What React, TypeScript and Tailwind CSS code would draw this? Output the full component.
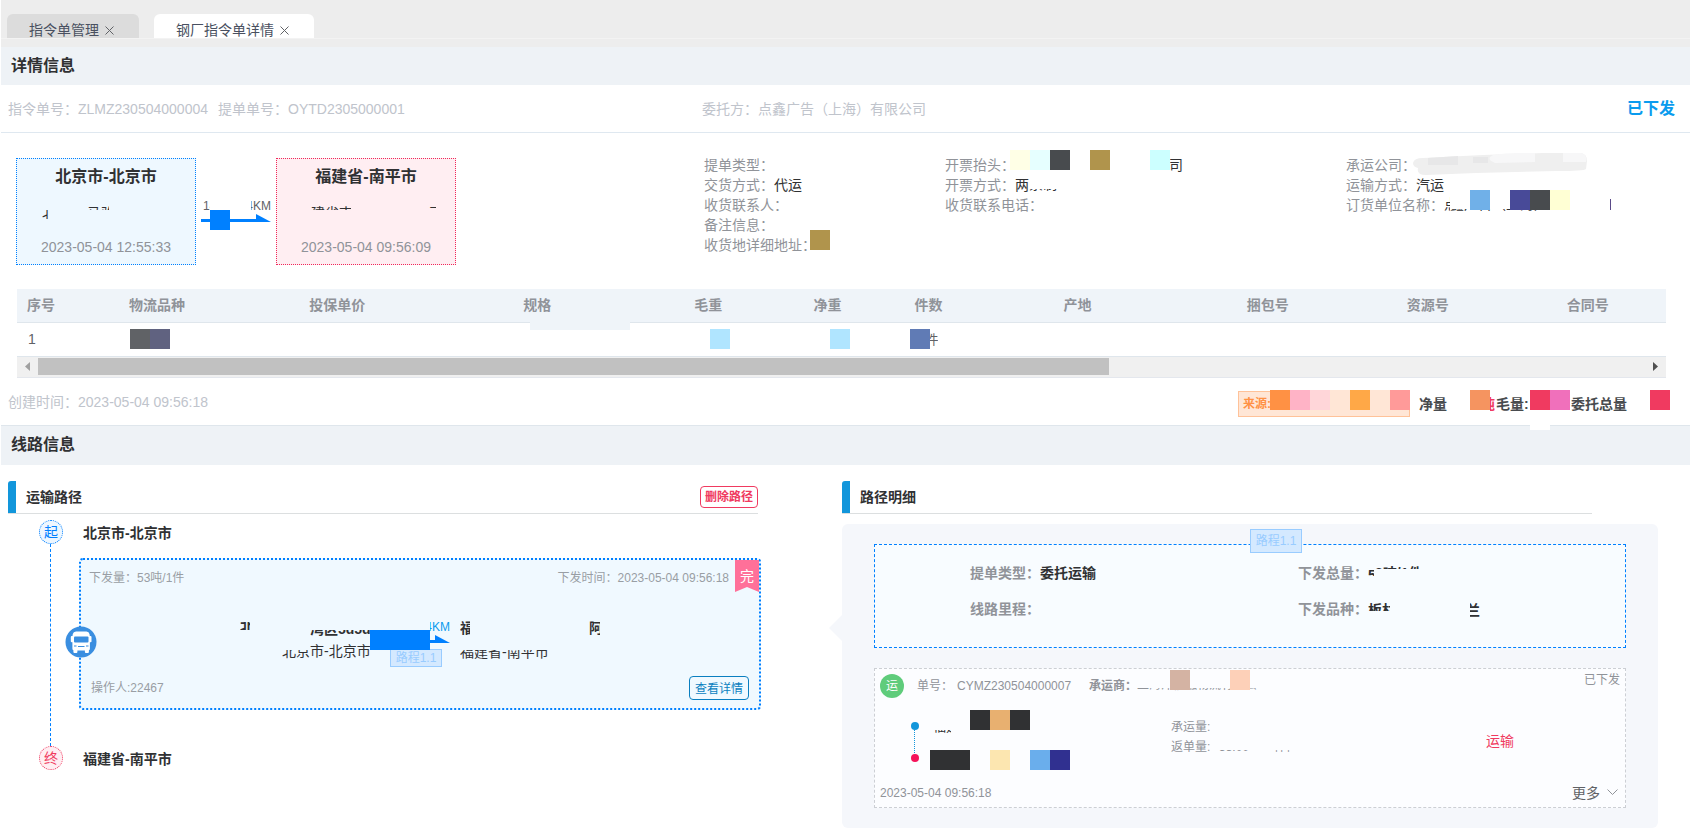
import type { ReactNode } from "react";
import clsx from "clsx";

const tabs = [
  { label: "指令单管理", active: false },
  { label: "钢厂指令单详情", active: true },
];

const columns = [
  { label: "序号", width: "w-[102px]" },
  { label: "物流品种", width: "w-[180px]" },
  { label: "投保单价", width: "w-[214px]" },
  { label: "规格", width: "w-[171px]" },
  { label: "毛重", width: "w-[119px]" },
  { label: "净重", width: "w-[101px]" },
  { label: "件数", width: "w-[149px]" },
  { label: "产地", width: "w-[183px]" },
  { label: "捆包号", width: "w-[160px]" },
  { label: "资源号", width: "w-[160px]" },
  { label: "合同号", width: "w-[109px]" },
];

// row of 20px squares that hides a private value
function Mosaic({ blocks, className }: { blocks: string[]; className?: string }) {
  return (
    <span className={clsx("flex shrink-0", className)}>
      {blocks.map((block, i) => (
        <i key={i} className={clsx("size-5 shrink-0", block)} />
      ))}
    </span>
  );
}

// partly hidden text, only a strip of it shows
function Strip({ className, children }: { className: string; children: ReactNode }) {
  return (
    <span className={clsx("absolute flex overflow-hidden whitespace-nowrap leading-none", className)}>
      <span className="shrink-0">{children}</span>
    </span>
  );
}

function Field({ label, value, children }: { label: string; value?: string; children?: ReactNode }) {
  return (
    <div className="relative flex h-5 items-center whitespace-nowrap">
      <dt className="text-[#909399]">{label}：</dt>
      <dd className="text-[#303133]">{value}</dd>
      {children}
    </div>
  );
}

function SectionHeader({ title, className }: { title: string; className?: string }) {
  return (
    <h2 className={clsx("flex items-center bg-[#eef2f6] pl-[10px] text-base font-bold text-[#303133]", className)}>
      {title}
    </h2>
  );
}

function PanelTitle({ title, className, children }: { title: string; className?: string; children?: ReactNode }) {
  return (
    <div className={clsx("flex h-[33px] items-center border-b border-[#dcdfe0]", className)}>
      <span className="h-8 w-2 rounded-tl-[3px] bg-[#1296db]" />
      <h3 className="ml-[10px] flex-1 font-bold text-[#303133]">{title}</h3>
      {children}
    </div>
  );
}

function PlaceCard({ name, time, className, children }: { name: string; time: string; className: string; children: ReactNode }) {
  return (
    <div className={clsx("relative flex h-[107px] w-[180px] flex-col items-center justify-between border border-dotted pt-[6px] pb-[7px]", className)}>
      <p className="text-base font-bold text-[#303133]">{name}</p>
      <p className="text-[#909399]">{time}</p>
      {children}
    </div>
  );
}

function BusIcon() {
  return (
    <svg viewBox="0 0 32 32" className="absolute top-[66px] -left-4 size-8">
      <circle cx="16" cy="16" r="15.5" fill="#3a8ee0" />
      <path
        fill="#fff"
        d="M11 5.500h10.500q2.500 0 3 2.500l.3 2h.7q1 0 1 1v4.500q0 .8-1 .8h-.6v6.200q0 1.500-1 1.800v1.700q0 1-1 1h-2q-1 0-1-1v-1.500h-7.500V26q0 1-1 1h-2q-1 0-1-1v-1.700q-1-.3-1-1.800v-6.200h-.6q-1 0-1-.8V11q0-1 1-1h.7l.3-2q.5-2.500 3.200-2.500Z"
      />
      <path fill="#3a8ee0" d="M10 10.500h12.500q1 0 1 1v4q0 1-1 1H10q-1 0-1-1v-4q0-1 1-1Z" />
      <path fill="none" stroke="#3a8ee0" strokeWidth="1.200" d="M9 20h2.500M21 20h2.500M13 20.500h6.500" />
    </svg>
  );
}

function PathTag({ className }: { className?: string }) {
  return (
    <span className={clsx("absolute flex items-center justify-center border border-[#99ccff] bg-[#d4e9ff] text-xs text-[#99ccff]", className)}>
      路程1.1
    </span>
  );
}

function OrderTable() {
  return (
    <div className="relative mr-6 ml-4">
      <table className="w-full table-fixed border-collapse text-left">
        <thead>
          <tr className="h-[33px] border-b border-[#dfe6ec] bg-[#eff4f9]">
            {columns.map((col) => (
              <th key={col.label} className={clsx("px-[10px] font-bold text-[#909399]", col.width)}>
                {col.label}
              </th>
            ))}
          </tr>
        </thead>
        <tbody>
          <tr className="h-[34px] border-b border-[#dfe6ec] text-[#606266]">
            <td className="px-[11px]">1</td>
            <td className="px-[11px]">
              <Mosaic blocks={["bg-[#606266]", "bg-[#606280]"]} />
            </td>
            <td />
            <td className="relative">
              <span className="absolute -top-px left-[17px] h-2 w-[100px] bg-[#eff4f9]" />
            </td>
            <td className="pl-[26px]">
              <Mosaic blocks={["bg-[#b0e5ff]"]} />
            </td>
            <td className="pl-[27px]">
              <Mosaic blocks={["bg-[#b0e5ff]"]} />
            </td>
            <td className="pl-[6px]">
              <span className="relative flex items-center">
                <Mosaic blocks={["bg-[#607bb5]"]} />
                <Strip className="left-5 w-2 justify-end text-[13px]">件</Strip>
              </span>
            </td>
            <td />
            <td />
            <td />
            <td />
          </tr>
        </tbody>
      </table>
      {/* horizontal scrollbar */}
      <div className="flex h-[21px] items-center border-b border-[#e4e7ed] bg-[#f0f0f0]">
        <button aria-label="向左滚动" className="flex w-[21px] justify-center">
          <svg viewBox="0 0 5 9" className="h-[9px] w-[5px]">
            <path d="M5 0v9L0 4.500Z" fill="#a0a0a0" />
          </svg>
        </button>
        <div className="flex-1">
          <div className="h-[17px] w-2/3 bg-[#c1c1c1]" />
        </div>
        <button aria-label="向右滚动" className="flex w-[21px] justify-center">
          <svg viewBox="0 0 5 9" className="h-[9px] w-[5px]">
            <path d="M0 0v9l5-4.500Z" fill="#505050" />
          </svg>
        </button>
      </div>
    </div>
  );
}

function TransportPath() {
  return (
    <section>
      <PanelTitle title="运输路径">
        <button className="h-[22px] w-[58px] rounded border border-[#f03a60] text-xs leading-5 font-bold text-[#f03a60]">
          删除路径
        </button>
      </PanelTitle>

      <div className="relative pt-[6px] pl-[31px]">
        <span className="absolute top-[30px] left-[42px] h-[202px] border-l border-dashed border-[#0080ff]" />
        <div className="flex h-6 items-center gap-5">
          <span className="flex size-6 items-center justify-center rounded-full border border-dotted border-[#0080ff] bg-[#eef7ff] text-[#0080ff]">
            起
          </span>
          <span className="pt-[2px] font-bold text-[#303133]">北京市-北京市</span>
        </div>

        <div className="relative -mr-[3px] mt-[14px] ml-10 flex h-[152px] flex-col justify-between rounded border-2 border-dotted border-[#0080ff] bg-[#f0f9ff] pt-[10px] pr-[10px] pb-2 pl-2 text-xs text-[#999ea4]">
          <BusIcon />
          <div className="flex justify-between">
            <span>下发量：53吨/1件</span>
            <span className="pr-5">下发时间：2023-05-04 09:56:18</span>
          </div>
          <svg viewBox="0 0 24 32" className="absolute top-0 right-0 h-8 w-6">
            <path d="M0 0h24v32l-12-5-12 5Z" fill="#ff7099" />
          </svg>
          <span className="absolute top-[6px] right-[5px] text-sm text-white">完</span>

          <div className="text-sm text-[#303133]">
            <Strip className="top-[62px] left-[159px] h-2 w-[10px] items-center font-bold">北</Strip>
            <Strip className="top-[70px] left-[229px] h-[6px] w-[60px] items-end font-bold">湾区5d5d</Strip>
            <Strip className="top-[84px] left-[201px] h-4 w-[89px]">北京市-北京市</Strip>
            <i className="absolute top-[82px] left-[200px] h-2 w-[29px] bg-[#f0f9ff]" />
            <Strip className="top-[61px] left-[379px] h-[14px] w-[10px] font-bold">福</Strip>
            <Strip className="top-[61px] left-[508px] h-[14px] w-[11px] font-bold">阿</Strip>
            <Strip className="top-[90px] left-[379px] h-[9px] w-[90px] items-end">福建省-南平市</Strip>
          </div>
          <Strip className="top-[61px] left-[349px] h-3 w-5 justify-end text-[#0a9bee]">4KM</Strip>
          <span className="absolute top-[70px] left-[289px] z-10 h-5 w-[60px] bg-[#0080ff]" />
          <svg viewBox="0 0 20 9" className="absolute top-[75px] left-[349px] h-[9px] w-5">
            <path d="M0 5h5V0l15 8H0Z" fill="#0080ff" />
          </svg>
          <PathTag className="top-[89px] left-[309px] h-[18px] w-[52px]" />

          <div className="flex items-end justify-between">
            <span className="pb-[4px] pl-[2px]">操作人:22467</span>
            <button className="h-6 w-[60px] rounded border border-[#0a7fc0] leading-6 text-[#0a7fc0]">查看详情</button>
          </div>
        </div>

        <div className="mt-9 flex h-6 items-center gap-5">
          <span className="flex size-6 items-center justify-center rounded-full border border-dotted border-[#f03a60] bg-[#ffeef2] text-[#f03a60]">
            终
          </span>
          <span className="pt-[2px] font-bold text-[#303133]">福建省-南平市</span>
        </div>
      </div>
    </section>
  );
}

function PathDetail() {
  return (
    <section>
      <PanelTitle title="路径明细" className="mr-[66px]" />
      <div className="relative mt-[10px] rounded-md bg-[#f5f7fb] px-8 py-5">
        <svg viewBox="0 0 13 26" className="absolute top-[91px] -left-[13px] h-[26px] w-[13px]">
          <path d="M13 0v26L0 13Z" fill="#f5f7fb" />
        </svg>

        <div className="relative grid h-[104px] grid-cols-[328fr_327fr] content-start gap-y-4 border border-dashed border-[#0080ff] bg-[#f8fcff] pt-[18px] pl-[95px] font-bold">
          <PathTag className="-top-4 left-1/2 h-6 w-[52px] font-normal" />
          <Field label="提单类型" value="委托运输" />
          <Field label="下发总量">
            <Strip className="top-[5px] left-[70px] h-2 w-[6px] text-[#303133]">5</Strip>
            <Strip className="top-[3px] left-[77px] h-[3px] w-12 text-[#303133]">3吨/1件</Strip>
          </Field>
          <Field label="线路里程" />
          <Field label="下发品种">
            <Strip className="top-1 left-[70px] h-2 w-[22px] text-[#303133]">板材</Strip>
            <Strip className="top-1 left-[172px] h-[14px] w-[10px] justify-end text-[#303133]">兰</Strip>
          </Field>
        </div>

        <div className="relative mt-5 flex h-[140px] flex-col justify-between border border-dashed border-[#cccfd4] bg-[#fcfdff] px-[5px] pt-[5px] pb-1 text-xs text-[#909399]">
          <div className="flex">
            <span className="flex size-6 items-center justify-center rounded-full bg-[#5fcc7b] text-white">运</span>
            <span className="ml-[13px] flex h-6 items-center">单号：</span>
            <span className="ml-1 flex h-6 items-center">CYMZ230504000007</span>
            <span className="relative ml-[18px] flex h-6 items-center font-bold">
              承运商：
              <Strip className="top-[14px] left-12 h-[3px] w-[120px] items-end font-normal">上海泽信融物流有限公司</Strip>
              <Mosaic className="absolute -top-1 left-[81px]" blocks={["bg-[#d4b3a3]", "", "", "bg-[#fdd0b8]"]} />
            </span>
            <span className="ml-auto h-4 leading-3">已下发</span>
          </div>

          <svg viewBox="0 0 8 40" className="absolute top-[53px] left-9 h-10 w-2">
            <path d="M3.500 8v24" stroke="#1296db" strokeDasharray="1 1" />
            <circle cx="4" cy="4" r="4" fill="#1296db" />
            <circle cx="4" cy="36" r="4" fill="#f5145a" />
          </svg>
          <Strip className="top-[61px] left-[58px] h-[3px] w-[18px] items-end text-[13px] text-[#303133]">福建</Strip>
          <Mosaic className="absolute top-[41px] left-[95px]" blocks={["bg-[#303133]", "bg-[#e8b070]", "bg-[#303133]"]} />
          <Mosaic
            className="absolute top-[81px] left-[55px]"
            blocks={["bg-[#303133]", "bg-[#303133]", "", "bg-[#fce6b0]", "", "bg-[#6aaeec]", "bg-[#303090]"]}
          />

          <div className="grid grid-cols-[291fr_315fr_134fr] items-center pb-[6px]">
            <div />
            <div className="relative leading-5">
              <p>承运量:</p>
              <p>返单量:</p>
              <Strip className="top-[33px] left-12 h-[3px] w-8 items-end">53.00</Strip>
              <Strip className="top-[33px] left-[103px] h-[3px] w-4 items-end">件件</Strip>
            </div>
            <p className="pt-2 text-sm text-[#f03a60]">运输</p>
          </div>

          <div className="flex items-center justify-between">
            <span>2023-05-04 09:56:18</span>
            <button className="flex items-center gap-[7px] pr-[2px] text-sm text-[#606266]">
              更多
              <svg viewBox="0 0 11 7" className="h-[7px] w-[11px]" fill="none" stroke="#909399">
                <path d="m.5.5 5 5 5-5" />
              </svg>
            </button>
          </div>
        </div>
      </div>
    </section>
  );
}

export default function App() {
  return (
    <main className="min-h-screen border-x border-white bg-white font-['Liberation_Sans','Noto_Sans_CJK_SC',sans-serif] text-sm">
      {/* tabs */}
      <nav className="bg-[#ededed] pt-[14px]">
        <div className="flex gap-[15px] pl-[6px]">
          {tabs.map((tab) => (
            <div
              key={tab.label}
              className={clsx(
                "flex h-6 items-start gap-[6px] overflow-hidden rounded-t-md pt-[6px] pr-[25px] pl-[22px] leading-5 text-[#495060]",
                tab.active ? "bg-white" : "bg-[#dcdcdc]"
              )}
            >
              <button>{tab.label}</button>
              <button aria-label="关闭" className="pt-[6px]">
                <svg viewBox="0 0 9 9" className="size-[9px]" fill="none" stroke="#606266">
                  <path d="m.5.5 8 8M8.500.5l-8 8" />
                </svg>
              </button>
            </div>
          ))}
        </div>
        <div className="h-[9px] border-t border-[#f3f3f3]" />
      </nav>

      <SectionHeader title="详情信息" className="h-[38px]" />
      <div className="grid h-12 grid-cols-[701fr_988fr] items-center border-b border-[#dfe8f0] text-[#c0c4cc]">
        <div className="flex gap-[10px] pl-[7px]">
          <span>指令单号：ZLMZ230504000004</span>
          <span>提单单号：OYTD2305000001</span>
        </div>
        <div className="flex items-center justify-between pr-[15px]">
          <span>委托方：点鑫广告（上海）有限公司</span>
          <span className="pt-px text-base font-bold text-[#0a9bee]">已下发</span>
        </div>
      </div>

      {/* summary */}
      <div className="grid h-[156px] grid-cols-[703fr_241fr_401fr_344fr] pt-[22px]">
        <div className="flex pt-[3px] pl-[15px]">
          <PlaceCard name="北京市-北京市" time="2023-05-04 12:55:33" className="border-[#0080ff] bg-[#eef8ff]">
            <Strip className="top-[51px] left-[25px] h-[9px] w-[7px] items-end text-[#303133]">北</Strip>
            <Strip className="top-[47px] left-[70px] h-1 w-[22px] text-[#303133]">马驹</Strip>
          </PlaceCard>
          <div className="relative w-20 text-xs text-[#606266]">
            <Strip className="top-[42px] left-[7px] h-[10px] w-[7px]">14</Strip>
            <Strip className="top-[42px] right-[5px] h-[10px] w-5 justify-end">4KM</Strip>
            <svg viewBox="0 0 70 20" className="absolute top-[52px] left-[5px] h-5 w-[70px]">
              <path d="M0 9h55V4l15 8H0Z" fill="#0080ff" />
              <path d="M9 0h20v20H9Z" fill="#0080ff" />
            </svg>
          </div>
          <PlaceCard name="福建省-南平市" time="2023-05-04 09:56:09" className="border-[#f0285a] bg-[#ffeef2]">
            <Strip className="top-[47px] left-[34px] h-1 w-10 text-[#303133]">建省南</Strip>
            <Strip className="top-[47px] left-[152px] h-1 w-[7px] text-[#303133]">司</Strip>
          </PlaceCard>
        </div>
        <dl>
          <Field label="提单类型" />
          <Field label="交货方式" value="代运" />
          <Field label="收货联系人" />
          <Field label="备注信息" />
          <Field label="收货地详细地址">
            <Mosaic className="absolute -top-[5px] left-[106px]" blocks={["bg-[#b0944c]"]} />
          </Field>
        </dl>
        <dl>
          <Field label="开票抬头">
            <Mosaic
              className="absolute -top-[5px] left-[65px]"
              blocks={["bg-[#ffffe6]", "bg-[#e6ffff]", "bg-[#484b4e]", "", "bg-[#b0944c]", "", "", "bg-[#ccffff]"]}
            />
            <Strip className="top-[3px] left-[225px] h-[14px] w-[13px] justify-end text-[#303133]">司</Strip>
          </Field>
          <Field label="开票方式" value="两">
            <Strip className="top-[14px] left-[84px] h-[2px] w-7 items-end text-[#303133]">票制</Strip>
          </Field>
          <Field label="收货联系电话" />
        </dl>
        <dl>
          <Field label="承运公司">
            <svg viewBox="0 0 174 24" className="absolute -top-[2px] left-[67px] h-6 w-[174px]">
              <path d="M7 21Q4 19 5 15 0 14 0 10 1 5 10 5L70 2 130 0h38q6 1 6 8l-1 8q-2 2-30 2l-80 2-50 2q-4 0-6-1Z" fill="#efefef" />
              <path d="M15 5l30-2v9H15ZM60 4h15v6H60Z" fill="#e7e7e8" />
              <path d="M80 2q12-2 24-2h18v9l-40 1q-10-4-2-8ZM150 0h18q7 2 5 9h-23Z" fill="#f7f7f8" />
            </svg>
          </Field>
          <Field label="运输方式" value="汽运" />
          <Field label="订货单位名称">
            <Strip className="top-[2px] left-[98px] h-[14px] w-[6px] text-[#303133]">点</Strip>
            <Strip className="top-[14px] left-[104px] h-[2px] w-24 items-end text-[#303133]">鑫广告（上海）</Strip>
            <Mosaic
              className="absolute -top-[5px] left-[124px]"
              blocks={["bg-[#70b0e8]", "", "bg-[#484a98]", "bg-[#484b4e]", "bg-[#ffffd4]"]}
            />
            <i className="absolute top-1 left-[264px] h-[11px] w-px bg-[#5a4a88]" />
          </Field>
        </dl>
      </div>

      <OrderTable />

      {/* totals */}
      <div className="flex h-[47px] items-center justify-between pr-5 pl-[7px]">
        <span className="pt-[2px] text-[#c0c4cc]">创建时间：2023-05-04 09:56:18</span>
        <div className="flex items-center pt-[6px] font-bold text-[#484b4e]">
          <span className="relative flex h-[26px] w-[172px] items-center border border-[#ffc299] bg-[#ffe6d6] pl-1 text-xs text-[#ff9144]">
            来源:
            <Mosaic
              className="absolute -top-[2px] -right-px"
              blocks={[
                "bg-[#ff9144]",
                "bg-[#ffb3c6]",
                "bg-[#ffd6d9]",
                "bg-[#ffe6d6]",
                "bg-[#ffa847]",
                "bg-[#ffe6d6]",
                "bg-[#ff9a99]",
              ]}
            />
          </span>
          <span className="ml-[9px] w-[51px]">净量</span>
          <Mosaic className="-mt-2" blocks={["bg-[#f59460]"]} />
          <span className="relative h-5 w-[6px]">
            <Strip className="top-[3px] left-0 w-[5px] justify-end text-[#f03a60]">吨</Strip>
          </span>
          <span className="w-[34px]">毛量:</span>
          <Mosaic className="-mt-2" blocks={["bg-[#f03a60]", "bg-[#f070bb]"]} />
          <span className="ml-px w-[79px]">委托总量</span>
          <Mosaic className="-mt-2" blocks={["bg-[#f03a60]"]} />
        </div>
      </div>

      <div className="relative">
        <SectionHeader title="线路信息" className="h-10 border-t border-[#dfe6ec]" />
        <i className="absolute top-0 right-[140px] h-[5px] w-5 bg-white" />
      </div>

      <div className="grid grid-cols-[750fr_816fr] gap-[84px] pt-4 pr-8 pl-[7px]">
        <TransportPath />
        <PathDetail />
      </div>
    </main>
  );
}
